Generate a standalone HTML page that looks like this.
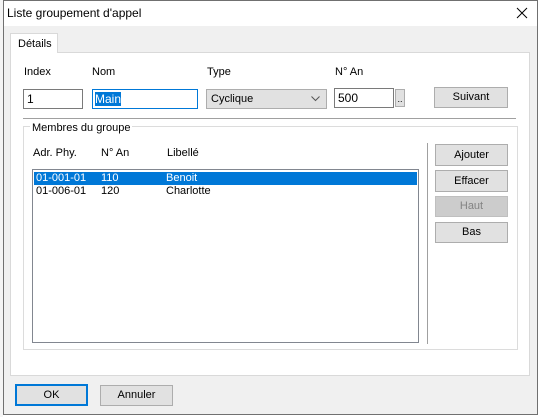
<!DOCTYPE html>
<html><head><meta charset="utf-8"><style>
*{margin:0;padding:0;box-sizing:border-box}
body{width:539px;height:417px;background:#fff;font-family:"Liberation Sans",sans-serif;font-size:11px;color:#000;position:relative;overflow:hidden}
.a{position:absolute}
.win{left:3px;top:0;width:535px;height:415px;border:1px solid #707070;background:#f0f0f0}
.btn{position:absolute;background:#e1e1e1;border:1px solid #adadad;text-align:center;font-size:11px}
</style></head><body>
<div class="a" style="left:0;top:0;width:3px;height:417px;background:#f4f4f4"></div>
<div class="a win"></div>
<div class="a" style="left:4px;top:1px;width:533px;height:25px;background:#fff"></div>
<div class="a" style="left:7px;top:6px;font-size:12px">Liste groupement d'appel</div>
<svg class="a" style="left:516px;top:7px" width="12" height="12"><path d="M1 1L11 11M11 1L1 11" stroke="#000" stroke-width="1"/></svg>
<div class="a" style="left:10px;top:52px;width:520px;height:324px;background:#fff;border:1px solid #d9d9d9"></div>
<div class="a" style="left:10px;top:33px;width:48px;height:20px;background:#fff;border:1px solid #d9d9d9;border-bottom:none;padding:4px 0 0 7px">Détails</div>
<div class="a" style="left:24px;top:66px">Index</div>
<div class="a" style="left:92px;top:66px">Nom</div>
<div class="a" style="left:207px;top:66px">Type</div>
<div class="a" style="left:335px;top:66px">N° An</div>
<div class="a" style="left:23px;top:89px;width:60px;height:20px;border:1px solid #7a7a7a;background:#fff;padding:2px 0 0 3px;font-size:12px">1</div>
<div class="a" style="left:92px;top:89px;width:106px;height:20px;border:1px solid #0078d7;background:#fff;padding:2px 0 0 2px;font-size:12px"><span style="background:#0078d7;color:#fff">Main</span></div>
<div class="a" style="left:206px;top:89px;width:121px;height:20px;border:1px solid #adadad;background:#e1e1e1;padding:3px 0 0 4px">Cyclique</div>
<svg class="a" style="left:311px;top:96px" width="9" height="6"><path d="M0.5 0.5L4.5 4.5L8.5 0.5" stroke="#555" fill="none"/></svg>
<div class="a" style="left:334px;top:88px;width:60px;height:20px;border:1px solid #7a7a7a;background:#fff;padding:2px 0 0 3px;font-size:12px">500</div>
<div class="btn" style="left:395px;top:89px;width:10px;height:18px;line-height:18px;font-size:9px">..</div>
<div class="btn" style="left:434px;top:87px;width:74px;height:21px;line-height:19px">Suivant</div>
<div class="a" style="left:23px;top:118px;width:493px;height:1px;background:#a0a0a0"></div>
<div class="a" style="left:23px;top:126px;width:495px;height:224px;border:1px solid #dcdcdc"></div>
<div class="a" style="left:30px;top:122px;background:#fff;padding:0 2px">Membres du groupe</div>
<div class="a" style="left:33px;top:147px">Adr. Phy.</div>
<div class="a" style="left:101px;top:147px">N° An</div>
<div class="a" style="left:167px;top:147px">Libellé</div>
<div class="a" style="left:32px;top:169px;width:387px;height:174px;border:1px solid #828790;background:#fff"></div>
<div class="a" style="left:34px;top:172px;width:383px;height:13px;background:#0078d7"></div>
<div class="a" style="left:36px;top:172px;color:#fff">01-001-01</div>
<div class="a" style="left:101px;top:172px;color:#fff">110</div>
<div class="a" style="left:166px;top:172px;color:#fff">Benoit</div>
<div class="a" style="left:36px;top:185px">01-006-01</div>
<div class="a" style="left:101px;top:185px">120</div>
<div class="a" style="left:166px;top:185px">Charlotte</div>
<div class="a" style="left:427px;top:143px;width:1px;height:201px;background:#a0a0a0"></div>
<div class="btn" style="left:435px;top:144px;width:73px;height:22px;line-height:20px">Ajouter</div>
<div class="btn" style="left:435px;top:170px;width:73px;height:22px;line-height:20px">Effacer</div>
<div class="btn" style="left:435px;top:196px;width:73px;height:21px;line-height:19px;background:#cccccc;border-color:#bfbfbf;color:#838383">Haut</div>
<div class="btn" style="left:435px;top:222px;width:73px;height:21px;line-height:19px">Bas</div>
<div class="btn" style="left:15px;top:384px;width:73px;height:22px;line-height:18px;border:2px solid #0078d7">OK</div>
<div class="btn" style="left:100px;top:385px;width:73px;height:21px;line-height:19px">Annuler</div>
</body></html>
